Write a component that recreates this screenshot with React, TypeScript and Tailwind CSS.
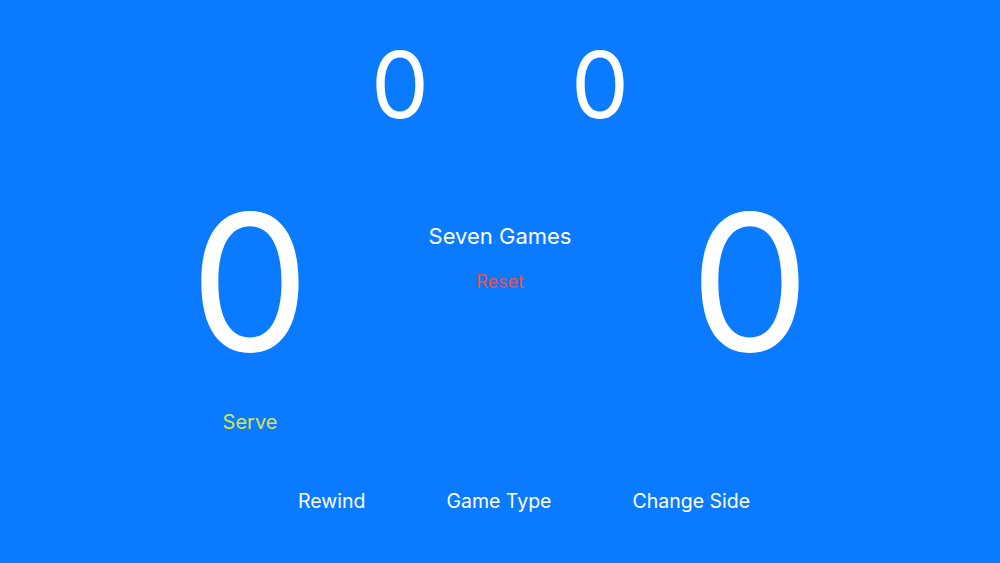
export default function App() {
  return (
    <div
      className="w-[1000px] h-[563px] bg-[#0a7aff] text-white overflow-hidden"
      style={{ fontFamily: "Inter, 'Noto Sans', sans-serif" }}
    >
      <div className="pt-[39px] flex justify-center gap-[100px]">
        <div className="w-[100px] text-center text-[92px] leading-[92px]">0</div>
        <div className="w-[100px] text-center text-[92px] leading-[92px]">0</div>
      </div>
      <div className="mt-[53px] grid grid-cols-3 px-[125px]">
        <div className="flex flex-col items-center">
          <div className="pt-[5px] text-[190px] leading-[187px]">0</div>
          <div className="mt-[36px] text-[20px] leading-[20px] text-[#d8e24c]">Serve</div>
        </div>
        <div className="flex flex-col items-center pt-[41px]">
          <div className="text-[22px] leading-[22px]">Seven Games</div>
          <div className="mt-[26px] text-[18px] leading-[18px] text-[#e0524e]">Reset</div>
        </div>
        <div className="flex flex-col items-center">
          <div className="pt-[5px] text-[190px] leading-[187px]">0</div>
        </div>
      </div>
      <div className="mt-[59px] flex pl-[298px] gap-[81px] text-[19.5px] leading-[20px]">
        <span>Rewind</span>
        <span>Game Type</span>
        <span>Change Side</span>
      </div>
    </div>
  );
}
